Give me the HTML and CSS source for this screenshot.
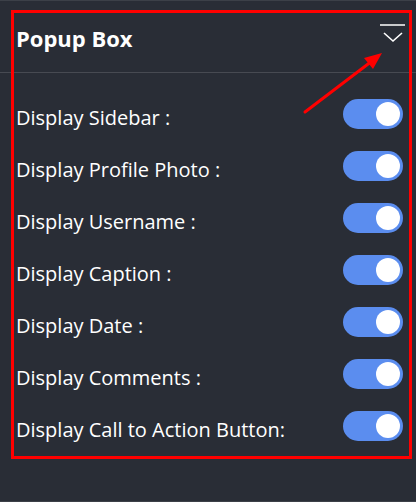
FILE: index.html
```html
<!DOCTYPE html>
<html lang="en">
<head>
    <meta charset="UTF-8">
    <title>Popup Box</title>
    <link rel="stylesheet" href="styles.css">
</head>
<body>
    <div class="panel">
        <div class="panel-header">
            <span class="panel-title">Popup Box</span>
            <svg class="collapse-icon" width="26" height="20" viewBox="0 0 26 20">
                <line x1="0" y1="1" x2="25" y2="1" stroke="#fff" stroke-width="1.5"/>
                <polyline points="4,9 13,17 22,9" fill="none" stroke="#fff" stroke-width="1.6"/>
            </svg>
        </div>

        <div class="settings">
            <div class="setting-row">
                <span>Display Sidebar :</span>
                <label class="switch"><input type="checkbox" checked><span class="slider"></span></label>
            </div>
            <div class="setting-row">
                <span>Display Profile Photo :</span>
                <label class="switch"><input type="checkbox" checked><span class="slider"></span></label>
            </div>
            <div class="setting-row">
                <span>Display Username :</span>
                <label class="switch"><input type="checkbox" checked><span class="slider"></span></label>
            </div>
            <div class="setting-row">
                <span>Display Caption :</span>
                <label class="switch"><input type="checkbox" checked><span class="slider"></span></label>
            </div>
            <div class="setting-row">
                <span>Display Date :</span>
                <label class="switch"><input type="checkbox" checked><span class="slider"></span></label>
            </div>
            <div class="setting-row">
                <span>Display Comments :</span>
                <label class="switch"><input type="checkbox" checked><span class="slider"></span></label>
            </div>
            <div class="setting-row">
                <span>Display Call to Action Button:</span>
                <label class="switch"><input type="checkbox" checked><span class="slider"></span></label>
            </div>
        </div>
    </div>

    <!-- annotation drawn over the screenshot -->
    <div class="highlight-box"></div>
    <svg class="pointer-arrow" width="90" height="70" viewBox="0 0 90 70">
        <line x1="5" y1="64" x2="72" y2="13" stroke="#f00" stroke-width="3" stroke-linecap="round"/>
        <polygon points="82,5 64,10 73,21" fill="#f00"/>
    </svg>
</body>
</html>
```

FILE: styles.css
```css
* {
    margin: 0;
    padding: 0;
    box-sizing: border-box;
}

body {
    font-family: "Open Sans", "Noto Sans", sans-serif;
    background: #292d36;
    color: white;
    width: 416px;
    height: 502px;
    overflow: hidden;
    position: relative;
}

.panel {
    height: 502px;
    border-top: 1px solid #3c4048;
    border-bottom: 1px solid #3c4048;
}

.panel-header {
    display: flex;
    justify-content: space-between;
    align-items: flex-start;
    height: 72px;
    padding: 21px 10px 0 16px;
    border-bottom: 1px solid #474a52;
}

.panel-title {
    font-size: 22px;
    font-weight: 700;
    line-height: 32px;
}

.collapse-icon {
    margin-top: 2px;
}

.settings {
    padding: 15px 13px 0 16px;
}

.setting-row {
    display: flex;
    justify-content: space-between;
    align-items: center;
    height: 52px;
    font-size: 20px;
}

.setting-row > span {
    padding-top: 6px;
}

.switch {
    position: relative;
    display: inline-block;
    width: 60px;
    height: 30px;
}

.switch input {
    opacity: 0;
    width: 0;
    height: 0;
}

.slider {
    position: absolute;
    inset: 0;
    background: #5b8def;
    border-radius: 15px;
    cursor: pointer;
}

.slider::before {
    content: "";
    position: absolute;
    top: 3px;
    right: 3px;
    width: 24px;
    height: 24px;
    border-radius: 50%;
    background: white;
}

.highlight-box {
    position: absolute;
    left: 11px;
    top: 10px;
    width: 401px;
    height: 449px;
    border: 3px solid #f00;
    pointer-events: none;
}

.pointer-arrow {
    position: absolute;
    left: 300px;
    top: 48px;
}
```
